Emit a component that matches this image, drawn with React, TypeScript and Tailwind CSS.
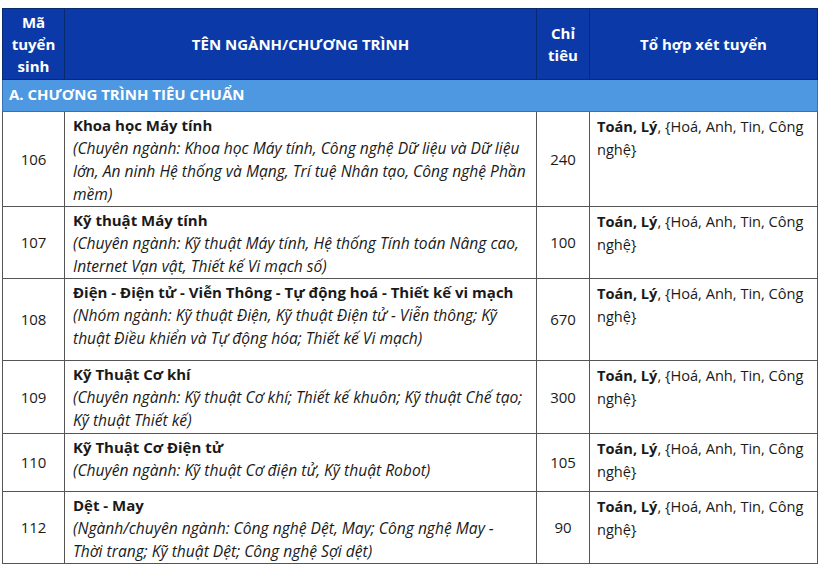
const rows = [
  {
    code: "106",
    title: "Khoa học Máy tính",
    desc: "(Chuyên ngành: Khoa học Máy tính, Công nghệ Dữ liệu và Dữ liệu lớn, An ninh Hệ thống và Mạng, Trí tuệ Nhân tạo, Công nghệ Phần mềm)",
    quota: "240",
    h: "h-[94px]",
  },
  {
    code: "107",
    title: "Kỹ thuật Máy tính",
    desc: "(Chuyên ngành: Kỹ thuật Máy tính, Hệ thống Tính toán Nâng cao, Internet Vạn vật, Thiết kế Vi mạch số)",
    quota: "100",
    h: "h-[70px]",
  },
  {
    code: "108",
    title: "Điện - Điện tử - Viễn Thông - Tự động hoá - Thiết kế vi mạch",
    desc: "(Nhóm ngành: Kỹ thuật Điện, Kỹ thuật Điện tử - Viễn thông; Kỹ thuật Điều khiển và Tự động hóa; Thiết kế Vi mạch)",
    quota: "670",
    h: "h-[82px]",
  },
  {
    code: "109",
    title: "Kỹ Thuật Cơ khí",
    desc: "(Chuyên ngành: Kỹ thuật Cơ khí; Thiết kế khuôn; Kỹ thuật Chế tạo; Kỹ thuật Thiết kế)",
    quota: "300",
    h: "h-[73px]",
  },
  {
    code: "110",
    title: "Kỹ Thuật Cơ Điện tử",
    desc: "(Chuyên ngành: Kỹ thuật Cơ điện tử, Kỹ thuật Robot)",
    quota: "105",
    h: "h-[58px]",
  },
  {
    code: "112",
    title: "Dệt - May",
    desc: "(Ngành/chuyên ngành: Công nghệ Dệt, May; Công nghệ May - Thời\u00a0trang; Kỹ thuật Dệt; Công nghệ Sợi dệt)",
    quota: "90",
    h: "h-[66px]",
  },
];

export default function App() {
  return (
    <div className="w-[820px] h-[564px] overflow-hidden bg-white pt-[8px] pl-[2px] font-['Open_Sans',sans-serif] text-[#1a1a1a]">
      <table className="w-[815px] table-fixed border-collapse text-[15px] leading-[23px]">
        <colgroup>
          <col className="w-[62px]" />
          <col className="w-[472px]" />
          <col className="w-[53px]" />
          <col className="w-[228px]" />
        </colgroup>
        <thead>
          <tr className="h-[71px] bg-[#0b3aa8] text-white font-bold">
            <th className="border border-[#0a2a6e] text-center leading-[22px] text-[15px]">
              Mã
              <br />
              tuyển
              <br />
              sinh
            </th>
            <th className="border border-[#0a2a6e] text-center">TÊN NGÀNH/CHƯƠNG TRÌNH</th>
            <th className="border border-[#0a2a6e] text-center leading-[22px]">
              Chỉ
              <br />
              tiêu
            </th>
            <th className="border border-[#0a2a6e] text-center">Tổ hợp xét tuyển</th>
          </tr>
        </thead>
        <tbody>
          <tr className="h-[32px] bg-[#4d98e0]">
            <td colSpan={4} className="border border-[#3a6fb0] px-[6px] pb-[2px] font-bold text-white text-[15px]">
              A. CHƯƠNG TRÌNH TIÊU CHUẨN
            </td>
          </tr>
          {rows.map((r) => (
            <tr key={r.code} className={r.h}>
              <td className="border border-[#555] text-center align-middle">{r.code}</td>
              <td className="border border-[#555] px-[8px] pt-[2px] align-top">
                <p className="font-bold">{r.title}</p>
                <p className="italic text-[15.6px]">{r.desc}</p>
              </td>
              <td className="border border-[#555] text-center align-middle">{r.quota}</td>
              <td className="border border-[#555] px-[7px] pt-[3px] align-top text-[14.6px]">
                <span className="font-bold">Toán, Lý</span>, {"{"}Hoá, Anh, Tin, Công nghệ{"}"}
              </td>
            </tr>
          ))}
          <tr className="h-[40px]">
            <td className="border border-[#555]"></td>
            <td className="border border-[#555]"></td>
            <td className="border border-[#555]"></td>
            <td className="border border-[#555]"></td>
          </tr>
        </tbody>
      </table>
    </div>
  );
}
